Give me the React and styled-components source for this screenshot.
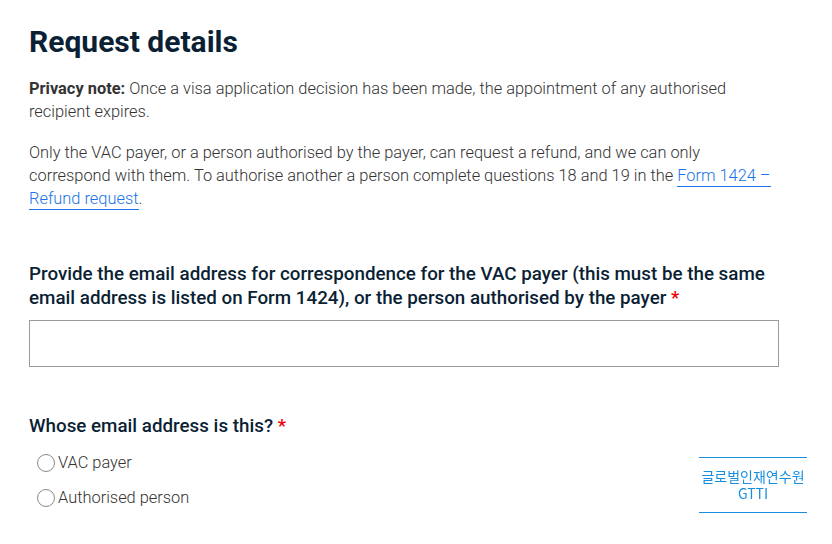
import React from "react";
import styled, { createGlobalStyle } from "styled-components";

const Global = createGlobalStyle`
  html, body { margin: 0; padding: 0; background: #fff; }
  body { font-family: Roboto, "Noto Sans", sans-serif; }
`;

const Page = styled.main`
  width: 752px;
  padding: 20px 0 0 29px;
`;

const Title = styled.h1`
  margin: 0 0 13px;
  font-size: 30px;
  line-height: 44px;
  font-weight: 700;
  color: #0b1f35;
`;

const Para = styled.p`
  margin: 0 0 18px;
  font-size: 16.4px;
  line-height: 23px;
  font-weight: 300;
  color: #333;
`;

const Strong = styled.strong`
  font-weight: 700;
  color: #333;
`;

const Link = styled.a`
  color: #1a73e8;
  text-decoration: none;
  border-bottom: 1px solid #1a73e8;
  padding-bottom: 1px;
`;

const Field = styled.div`
  margin-top: ${(p) => p.$top}px;
`;

const Label = styled.label`
  display: block;
  font-size: 18.8px;
  line-height: 24px;
  font-weight: 500;
  color: #0b1f35;
  margin-bottom: ${(p) => p.$gap}px;
`;

const Req = styled.span`
  color: #e00;
`;

const Input = styled.input`
  display: block;
  box-sizing: border-box;
  width: 750px;
  height: 47px;
  border: 1px solid #9a9a9a;
  border-radius: 0;
  outline: none;
  font: inherit;
`;

const RadioRow = styled.label`
  display: flex;
  align-items: center;
  height: 35px;
  padding-left: 8px;
  font-size: 16.4px;
  font-weight: 300;
  color: #333;
  cursor: pointer;
`;

const Circle = styled.span`
  width: 18px;
  height: 18px;
  border: 1px solid #8a8a8a;
  border-radius: 50%;
  margin-right: 3px;
  box-sizing: border-box;
`;

const Badge = styled.a`
  position: fixed;
  left: 699px;
  top: 457px;
  width: 108px;
  height: 56px;
  box-sizing: border-box;
  border-top: 1px solid #1a8fe0;
  border-bottom: 1px solid #1a8fe0;
  display: flex;
  flex-direction: column;
  align-items: center;
  justify-content: center;
  color: #1a8fe0;
  font-family: "Noto Sans CJK KR", Roboto, sans-serif;
  font-size: 14px;
  line-height: 17px;
  text-decoration: none;
`;

export default function App() {
  return (
    <>
      <Global />
      <Page>
        <Title>Request details</Title>
        <Para>
          <Strong>Privacy note:</Strong> Once a visa application decision has been made, the appointment of any authorised recipient expires.
        </Para>
        <Para>
          Only the VAC payer, or a person authorised by the payer, can request a refund, and we can only correspond with them. To authorise another a person complete questions 18 and 19 in the <Link href="#">Form 1424{"\u00a0"}– Refund request</Link>.
        </Para>
        <Field $top={52}>
          <Label $gap={10}>
            Provide the email address for correspondence for the VAC payer (this must be the same email address is listed on Form 1424), or the person authorised by the payer <Req>*</Req>
          </Label>
          <Input type="text" />
        </Field>
        <Field $top={47}>
          <Label $gap={7}>
            Whose email address is this? <Req>*</Req>
          </Label>
          <RadioRow><Circle />VAC payer</RadioRow>
          <RadioRow><Circle />Authorised person</RadioRow>
        </Field>
      </Page>
      <Badge href="#">
        <span>글로벌인재연수원</span>
        <span>GTTI</span>
      </Badge>
    </>
  );
}
